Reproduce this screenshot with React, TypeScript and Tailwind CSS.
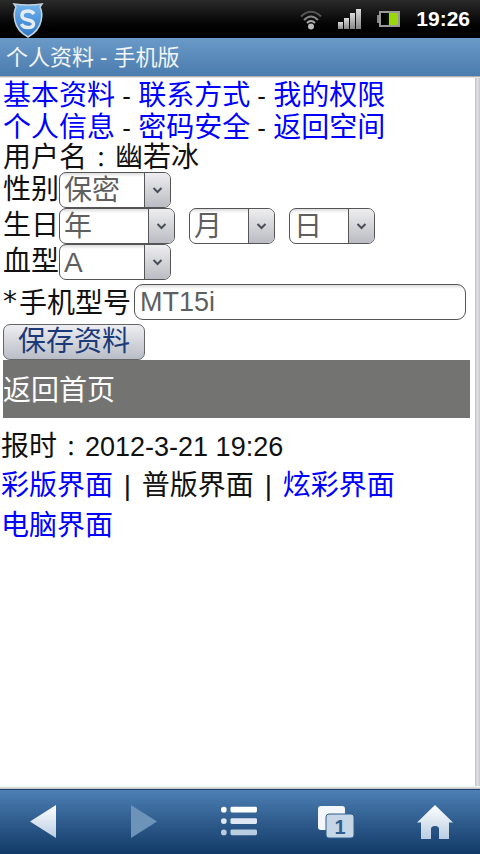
import type { ReactNode } from "react"

const font = "font-['Liberation_Sans','Noto_Sans_CJK_SC',sans-serif]"

function Select({ value, width, gap }: { value: string; width: string; gap?: string }) {
  return (
    <div className={`flex h-9 ${width} ${gap ?? ""} overflow-hidden rounded-[7px] border border-[#555] bg-gradient-to-b from-[#ddd] from-0% via-white via-[12%] to-white`}>
      <div className="flex-1 pl-[4px] text-[28px] leading-[36px] text-[#5f5f5f]">{value}</div>
      <div className="flex w-[26px] items-center justify-center border-l border-[#555] bg-gradient-to-b from-[#eeeef0] to-[#b9bcc2]">
        <svg width="11" height="7" viewBox="0 0 11 7" fill="none">
          <path d="M1.5 1 5.5 5 9.5 1" stroke="#4a4f5a" strokeWidth="2" />
        </svg>
      </div>
    </div>
  )
}

function Row({ children, className }: { children: ReactNode; className?: string }) {
  return <div className={`flex h-9 items-center ${className ?? ""}`}>{children}</div>
}

function NavButton({ children, className }: { children: ReactNode; className?: string }) {
  return <div className={`flex w-[96px] items-center justify-center ${className ?? ""}`}>{children}</div>
}

function Dash() {
  return <span className="text-[26px] text-[#111]"> - </span>
}

function Colon() {
  return <span className="inline-block h-[20px] w-[28px] text-center font-['Noto_Sans_CJK_TC',sans-serif] text-[22px] leading-[20px]">：</span>
}

function Pipe() {
  return <span className="mx-[3px]"> | </span>
}

export default function App() {
  return (
    <div className={`flex h-[854px] w-[480px] flex-col overflow-hidden bg-white ${font}`}>
      {/* status bar */}
      <div className="flex h-[38px] items-center bg-gradient-to-b from-[#2b2b2b] via-[#0c0c0c] to-black pl-[12px] pr-[10px]">
        <svg width="32" height="37" viewBox="0 0 32 37">
          <defs>
            <linearGradient id="shield" x1="0" y1="0" x2="0" y2="1">
              <stop offset="0" stopColor="#6fb2ee" />
              <stop offset="1" stopColor="#2f78c8" />
            </linearGradient>
          </defs>
          <path d="M2 3 Q16 5 30 3 L28 6 Q31 12 29 20 Q27 30 16 36 Q5 30 3 20 Q1 12 4 6Z" fill="url(#shield)" stroke="#c5d3dc" strokeWidth="1.5" />
          <path d="M22 13 Q20 10 16 10 Q10 10 10 14.500 Q10 18 16 19 Q21.500 20 21.500 23 Q21.500 26.500 16 26.500 Q11 26.500 9.500 23" fill="none" stroke="#e6edf2" strokeWidth="3.500" />
        </svg>
        <div className="ml-auto flex items-center">
          <svg width="24" height="22" viewBox="0 0 24 22" fill="none" className="mr-[15px]">
            <path d="M2 8.500 Q12 -1 22 8.500" stroke="#555" strokeWidth="2" />
            <path d="M5 12 Q12 5 19 12" stroke="#888" strokeWidth="2" />
            <path d="M8 15 Q12 11 16 15" stroke="#aaa" strokeWidth="2" />
            <circle cx="12" cy="18.500" r="3" fill="#bbb" />
          </svg>
          <div className="mr-[16px] flex items-end gap-[1px]">
            <div className="h-[7px] w-[5px] bg-gradient-to-b from-[#ddd] to-[#888]" />
            <div className="h-[11px] w-[5px] bg-gradient-to-b from-[#ddd] to-[#888]" />
            <div className="h-[16px] w-[5px] bg-gradient-to-b from-[#ddd] to-[#888]" />
            <div className="h-[20px] w-[5px] bg-gradient-to-b from-[#ddd] to-[#888]" />
          </div>
          <div className="mr-[16px] flex items-center">
            <div className="h-[8px] w-[2px] bg-[#888]" />
            <div className="flex h-[16px] w-[21px] justify-end border-2 border-[#999] bg-gradient-to-r from-black to-[#3c5a10]">
              <div className="w-[9px] bg-[#9ad80e]" />
            </div>
          </div>
          <span className="text-[21px] font-bold text-white">19:26</span>
        </div>
      </div>

      {/* title bar */}
      <div className="flex h-[38px] items-center bg-gradient-to-b from-[#6b9ac8] to-[#4a7cae] pl-[6px] text-[22px] text-[#f2f5f8]">
        个人资料 - 手机版
      </div>

      {/* page */}
      <div className="relative flex flex-1 flex-col text-[28px] text-[#111]">
        <div className="h-[2px] bg-gradient-to-b from-[#999] to-white" />
        <div className="flex flex-col pl-[3px] pr-[10px] pt-[2px]">
          <div className="h-[32px] leading-[32px] text-[#0000ff]">
            基本资料
            <Dash />
            联系方式
            <Dash />
            我的权限
          </div>
          <div className="h-[32px] leading-[32px] text-[#0000ff]">
            个人信息
            <Dash />
            密码安全
            <Dash />
            返回空间
          </div>
          <div className="h-[28px] leading-[28px]">
            用户名
            <Colon />
            幽若冰
          </div>
          <Row>
            性别
            <Select value="保密" width="w-[112px]" />
          </Row>
          <Row>
            生日
            <Select value="年" width="w-[116px]" />
            <Select value="月" width="w-[86px]" gap="ml-[14px]" />
            <Select value="日" width="w-[86px]" gap="ml-[14px]" />
          </Row>
          <Row>
            血型
            <Select value="A" width="w-[112px]" />
          </Row>
          <Row className="mt-[4px]">
            <span className="w-[16px] font-['DejaVu_Sans',sans-serif] text-[28px] leading-none">*</span>
            <span className="w-[112px] pt-[3px]">手机型号</span>
            <div className="ml-[3px] h-9 w-[332px] rounded-[9px] border border-[#555] bg-gradient-to-b from-[#ddd] from-0% via-white via-[12%] to-white pl-[5px] text-[27px] leading-[34px] text-[#5f5f5f]">
              MT15i
            </div>
          </Row>
          <div className="mt-[4px] flex h-9 w-[142px] items-center justify-center rounded-[7px] border border-[#666] bg-gradient-to-b from-[#eeeef2] to-[#b9bdc6] text-[28px] leading-none text-[#1c3a78]">
            保存资料
          </div>
          <div className="flex h-[58px] items-center bg-[#737472] pt-[3px] text-white">返回首页</div>
        </div>
        <div className="flex flex-col pl-[1px] pr-[10px] pt-[9px]">
          <div className="h-[39px] leading-[39px]">
            报时
            <Colon />
            <span className="text-[27px]">2012-3-21 19:26</span>
          </div>
          <div className="h-[40px] leading-[40px]">
            <span className="text-[#0000ff]">彩版界面</span>
            <Pipe />
            普版界面
            <Pipe />
            <span className="text-[#0000ff]">炫彩界面</span>
          </div>
          <div className="h-[40px] leading-[40px] text-[#0000ff]">电脑界面</div>
        </div>
        <div className="absolute right-0 top-[2px] bottom-0 w-[5px] bg-gradient-to-r from-[#c2c2c6] via-[#e2e2e6] to-[#c8c8cc]" />
      </div>

      {/* bottom nav */}
      <div className="h-[3px] bg-gradient-to-b from-white to-[#bbb]" />
      <div className="flex h-[65px] items-center border-t border-[#1a3f6c] bg-gradient-to-b from-[#4d80b4] to-[#123a68]">
        <NavButton className="pr-[8px]">
          <svg width="30" height="36" viewBox="0 0 30 36">
            <defs>
              <linearGradient id="white" x1="0" y1="0" x2="0" y2="1">
                <stop offset="0" stopColor="#ffffff" />
                <stop offset="1" stopColor="#b9cde2" />
              </linearGradient>
            </defs>
            <path d="M27 1 V34 L1 17.500Z" fill="url(#white)" />
          </svg>
        </NavButton>
        <NavButton className="pr-[2px]">
          <svg width="30" height="36" viewBox="0 0 30 36">
            <path d="M3 1 V34 L29 17.500Z" fill="#6d93b9" />
          </svg>
        </NavButton>
        <NavButton className="pr-[2px]">
          <svg width="36" height="34" viewBox="0 0 38 34">
            <circle cx="3" cy="4" r="3" fill="#fff" />
            <rect x="10" y="1" width="28" height="6" rx="1.500" fill="#fff" />
            <circle cx="3" cy="16" r="3" fill="#dfe8f2" />
            <rect x="10" y="13" width="28" height="6" rx="1.500" fill="#dfe8f2" />
            <circle cx="3" cy="28" r="3" fill="#b9cde2" />
            <rect x="10" y="25" width="28" height="6" rx="1.500" fill="#b9cde2" />
          </svg>
        </NavButton>
        <NavButton className="pl-[2px]">
          <svg width="38" height="34" viewBox="0 0 38 34">
            <rect x="0" y="1" width="27" height="24" rx="3" fill="#f4f7fa" />
            <rect x="8" y="9" width="28" height="24" rx="3" fill="#c6d6e6" stroke="#2f5f90" strokeWidth="1" />
            <text x="22" y="29" textAnchor="middle" fontSize="20" fontWeight="700" fontFamily="Liberation Sans" fill="#2f5f90">1</text>
          </svg>
        </NavButton>
        <NavButton className="pl-[6px]">
          <svg width="36" height="35" viewBox="0 0 36 35">
            <path d="M18 0 L36 17.500 H32 V34 H22 V24 Q22 21 18 21 Q14 21 14 24 V34 H4 V17.500 H0Z" fill="url(#white)" />
          </svg>
        </NavButton>
      </div>
    </div>
  )
}
